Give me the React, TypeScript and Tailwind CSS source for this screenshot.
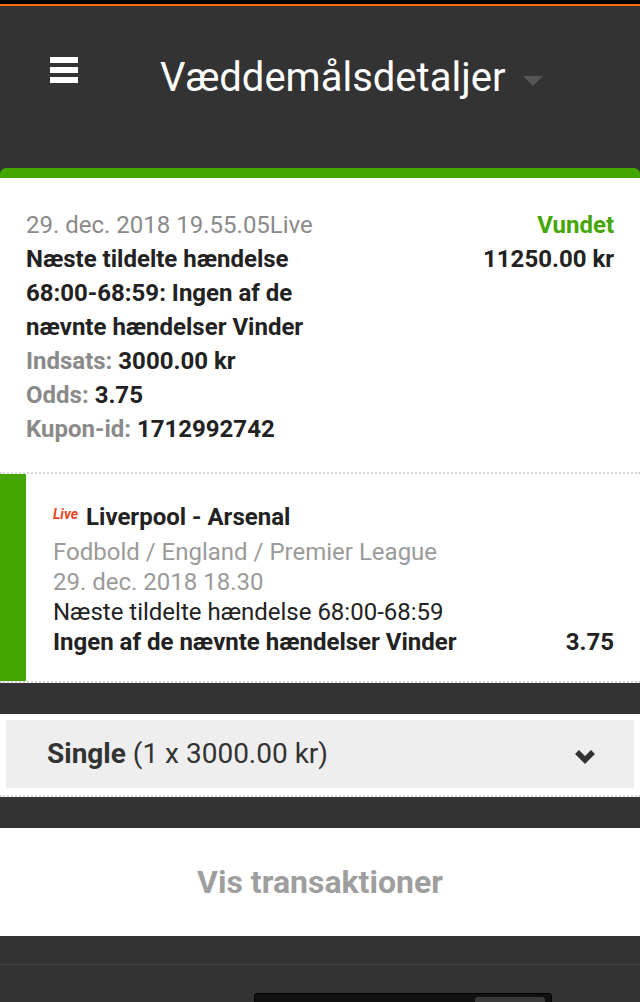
const font = { fontFamily: 'Roboto, "Noto Sans", sans-serif' };

function Chevron() {
    return (
        <svg width="22" height="16" viewBox="0 0 22 16" className="mt-[4px]">
            <polyline points="3,4 11,12 19,4" fill="none" stroke="#333" strokeWidth="5.5" strokeLinejoin="miter" />
        </svg>
    );
}

export default function App() {
    return (
        <div className="w-[640px] h-[1002px] overflow-hidden bg-[#333333]" style={font}>
            <div className="h-[4px] bg-black" />
            <div className="h-[2px] bg-[#ff6a0d]" />

            {/* header */}
            <div className="h-[162px] flex items-start pt-[44px]">
                <div className="w-[160px] pl-[50px] pt-[7px] flex flex-col gap-[4px]">
                    <div className="w-[28px] h-[6px] bg-white" />
                    <div className="w-[28px] h-[6px] bg-white" />
                    <div className="w-[28px] h-[6px] bg-white" />
                </div>
                <div className="flex items-center gap-[18px]">
                    <span className="text-white text-[40px] leading-[56px]">Væddemålsdetaljer</span>
                    <span className="w-0 h-0 border-l-[10px] border-r-[10px] border-t-[10px] border-l-transparent border-r-transparent border-t-[#555555] mt-[6px]" />
                </div>
            </div>

            {/* bet card */}
            <div className="bg-white rounded-t-[6px] border-t-[10px] border-[#44a600]">
                <div className="flex justify-between px-[26px] pt-[30px] pb-[26px] text-[24px] leading-[34px] border-b-2 border-dotted border-[#d6d6d6]">
                    <div className="w-[300px]">
                        <div className="text-[#8a8a8a]">29. dec. 2018 19.55.05Live</div>
                        <div className="font-bold text-[#222]">Næste tildelte hændelse 68:00-68:59: Ingen af de nævnte hændelser Vinder</div>
                        <div className="font-bold text-[#8a8a8a]">Indsats: <span className="text-[#222]">3000.00 kr</span></div>
                        <div className="font-bold text-[#8a8a8a]">Odds: <span className="text-[#222]">3.75</span></div>
                        <div className="font-bold text-[#8a8a8a]">Kupon-id: <span className="text-[#222]">1712992742</span></div>
                    </div>
                    <div className="text-right font-bold">
                        <div className="text-[#44a600]">Vundet</div>
                        <div className="text-[#222]">11250.00 kr</div>
                    </div>
                </div>

                <div className="flex border-b-2 border-dotted border-[#d6d6d6]">
                    <div className="w-[26px] bg-[#44a600]" />
                    <div className="flex-1 pl-[27px] pr-[26px] pt-[27px] pb-[24px] text-[24px] leading-[30px]">
                        <div className="flex items-baseline gap-[8px] leading-[33px]">
                            <span className="text-[14px] italic font-bold text-[#e8461c] -translate-y-[6px]">Live</span>
                            <span className="text-[24px] font-bold text-[#222]">Liverpool - Arsenal</span>
                        </div>
                        <div className="text-[#9a9a9a]">Fodbold / England / Premier League</div>
                        <div className="text-[#9a9a9a]">29. dec. 2018 18.30</div>
                        <div className="text-[#222]">Næste tildelte hændelse 68:00-68:59</div>
                        <div className="flex justify-between font-bold text-[#222]">
                            <span>Ingen af de nævnte hændelser Vinder</span>
                            <span>3.75</span>
                        </div>
                    </div>
                </div>
            </div>

            {/* bet type */}
            <div className="mt-[31px] bg-white px-[6px] pt-[6px] pb-[7px] border-b-2 border-dotted border-[#d6d6d6]">
                <div className="h-[68px] bg-[#eeeeee] flex items-center justify-between pl-[41px] pr-[38px]">
                    <span className="text-[28px] text-[#333]">
                        <span className="font-bold">Single</span> (1 x 3000.00 kr)
                    </span>
                    <Chevron />
                </div>
            </div>

            {/* transactions */}
            <div className="mt-[31px] h-[108px] bg-white flex items-center justify-center">
                <span className="text-[32px] font-bold text-[#9e9e9e]">Vis transaktioner</span>
            </div>

            <div className="mt-[28px] border-t border-[#474747] pt-[28px] pl-[254px]">
                <div className="w-[298px] h-[20px] bg-[#111] rounded-t-[3px] border border-[#000] flex justify-end pr-[6px] pt-[3px]">
                    <div className="w-[70px] h-full bg-[#3a3a3a] rounded-t-[3px]" />
                </div>
            </div>
        </div>
    );
}
